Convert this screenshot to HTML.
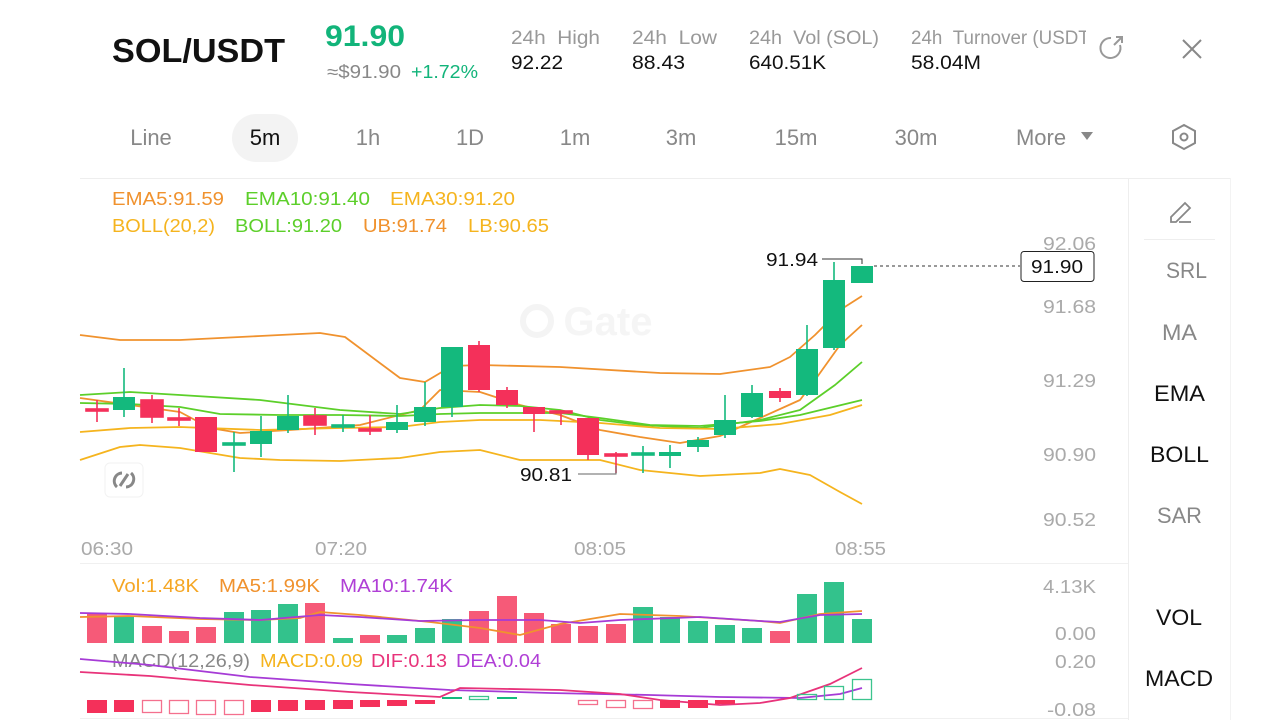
<!DOCTYPE html>
<html><head><meta charset="utf-8"><style>
html,body{margin:0;padding:0;background:#fff;}
svg{display:block;font-family:"Liberation Sans",Arial,sans-serif;}
</style></head><body>
<svg width="1280" height="720" viewBox="0 0 1280 720" xmlns="http://www.w3.org/2000/svg">
<rect width="1280" height="720" fill="#fff"/>
<!-- header -->
<text x="112" y="62" font-size="33" font-weight="bold" fill="#111" textLength="173" lengthAdjust="spacingAndGlyphs">SOL/USDT</text>
<text x="325" y="46" font-size="30" font-weight="bold" fill="#12B47A" textLength="80" lengthAdjust="spacingAndGlyphs">91.90</text>
<text x="327" y="78" font-size="18" fill="#888" textLength="74" lengthAdjust="spacingAndGlyphs">≈$91.90</text>
<text x="411" y="78" font-size="18" fill="#12B47A" textLength="67" lengthAdjust="spacingAndGlyphs">+1.72%</text>
<g font-size="19" fill="#999">
<text x="511" y="44" textLength="89" lengthAdjust="spacingAndGlyphs">24h&#160;&#160;High</text>
<text x="632" y="44" textLength="85" lengthAdjust="spacingAndGlyphs">24h&#160;&#160;Low</text>
<text x="749" y="44" textLength="130" lengthAdjust="spacingAndGlyphs">24h&#160;&#160;Vol (SOL)</text>
<text x="911" y="44" textLength="185" lengthAdjust="spacingAndGlyphs">24h&#160;&#160;Turnover (USDT)</text>
</g>
<g font-size="19" fill="#111">
<text x="511" y="69" textLength="52" lengthAdjust="spacingAndGlyphs">92.22</text>
<text x="632" y="69" textLength="53" lengthAdjust="spacingAndGlyphs">88.43</text>
<text x="749" y="69" textLength="77" lengthAdjust="spacingAndGlyphs">640.51K</text>
<text x="911" y="69" textLength="70" lengthAdjust="spacingAndGlyphs">58.04M</text>
</g>
<rect x="1086" y="20" width="30" height="40" fill="#fff"/>
<!-- refresh icon -->
<path d="M1120 45 A10 10 0 1 1 1111 38" fill="none" stroke="#999" stroke-width="2"/>
<path d="M1114 45 L1122 37 M1116 37 L1122 37 L1122 43" fill="none" stroke="#999" stroke-width="2"/>
<!-- close -->
<path d="M1183 40 L1201 58 M1201 40 L1183 58" stroke="#888" stroke-width="2"/>
<!-- tabs -->
<rect x="232" y="114" width="66" height="48" rx="24" fill="#f3f3f3"/>
<g font-size="22" fill="#888" text-anchor="middle">
<text x="151" y="145">Line</text><text x="265" y="145" fill="#111">5m</text><text x="368" y="145">1h</text><text x="470" y="145">1D</text><text x="575" y="145">1m</text><text x="681" y="145">3m</text><text x="796" y="145">15m</text><text x="916" y="145">30m</text><text x="1041" y="145">More</text>
</g>
<path d="M1081 132 L1093 132 L1087 140 Z" fill="#888"/>
<path d="M1184 125 L1195 131 L1195 143 L1184 149 L1173 143 L1173 131 Z" fill="none" stroke="#888" stroke-width="2"/>
<circle cx="1184" cy="137" r="3.5" fill="none" stroke="#888" stroke-width="2"/>
<!-- frames -->
<line x1="80" y1="178.5" x2="1231" y2="178.5" stroke="#eee"/>
<line x1="1128.5" y1="178" x2="1128.5" y2="720" stroke="#eee"/>
<line x1="1230.5" y1="178" x2="1230.5" y2="720" stroke="#f3f3f3"/>
<line x1="80" y1="563.5" x2="1128" y2="563.5" stroke="#f0f0f0"/>
<line x1="80" y1="718.5" x2="1128" y2="718.5" stroke="#f0f0f0"/>
<line x1="1144" y1="239.5" x2="1215" y2="239.5" stroke="#eee"/>
<!-- pencil -->
<path d="M1171 217 L1185 203 L1190 208 L1176 222 L1171 222 Z" fill="none" stroke="#888" stroke-width="1.8"/>
<line x1="1179" y1="222" x2="1191" y2="222" stroke="#888" stroke-width="1.8"/>
<g font-size="22" fill="#111">
<text x="1166" y="278" fill="#888" textLength="41" lengthAdjust="spacingAndGlyphs">SRL</text>
<text x="1162" y="340" fill="#888" textLength="35" lengthAdjust="spacingAndGlyphs">MA</text>
<text x="1154" y="401" textLength="51" lengthAdjust="spacingAndGlyphs">EMA</text>
<text x="1150" y="462" textLength="59" lengthAdjust="spacingAndGlyphs">BOLL</text>
<text x="1157" y="523" fill="#888" textLength="45" lengthAdjust="spacingAndGlyphs">SAR</text>
<text x="1156" y="625" textLength="46" lengthAdjust="spacingAndGlyphs">VOL</text>
<text x="1145" y="686" textLength="68" lengthAdjust="spacingAndGlyphs">MACD</text>
</g>
<!-- legends -->
<g font-size="18" lengthAdjust="spacingAndGlyphs">
<text x="112" y="205" fill="#F0922E" textLength="112" lengthAdjust="spacingAndGlyphs">EMA5:91.59</text>
<text x="245" y="205" fill="#5CCF2A" textLength="125" lengthAdjust="spacingAndGlyphs">EMA10:91.40</text>
<text x="390" y="205" fill="#F5B41E" textLength="125" lengthAdjust="spacingAndGlyphs">EMA30:91.20</text>
<text x="112" y="232" fill="#F5B41E" textLength="103" lengthAdjust="spacingAndGlyphs">BOLL(20,2)</text>
<text x="235" y="232" fill="#5CCF2A" textLength="107" lengthAdjust="spacingAndGlyphs">BOLL:91.20</text>
<text x="363" y="232" fill="#F0922E" textLength="84" lengthAdjust="spacingAndGlyphs">UB:91.74</text>
<text x="468" y="232" fill="#F5B41E" textLength="81" lengthAdjust="spacingAndGlyphs">LB:90.65</text>
<text x="112" y="592" fill="#F5A623" textLength="87" lengthAdjust="spacingAndGlyphs">Vol:1.48K</text>
<text x="219" y="592" fill="#F0922E" textLength="101" lengthAdjust="spacingAndGlyphs">MA5:1.99K</text>
<text x="340" y="592" fill="#B03FD6" textLength="113" lengthAdjust="spacingAndGlyphs">MA10:1.74K</text>
<text x="112" y="667" fill="#888" textLength="138" lengthAdjust="spacingAndGlyphs">MACD(12,26,9)</text>
<text x="260" y="667" fill="#F5B41E" textLength="103" lengthAdjust="spacingAndGlyphs">MACD:0.09</text>
<text x="371" y="667" fill="#E8337A" textLength="76" lengthAdjust="spacingAndGlyphs">DIF:0.13</text>
<text x="456" y="667" fill="#B03FD6" textLength="85" lengthAdjust="spacingAndGlyphs">DEA:0.04</text>
</g>
<!-- axis labels -->
<g font-size="18" fill="#aaa">
<text x="1043" y="250" textLength="53" lengthAdjust="spacingAndGlyphs">92.06</text>
<text x="1043" y="313" textLength="53" lengthAdjust="spacingAndGlyphs">91.68</text>
<text x="1043" y="387" textLength="53" lengthAdjust="spacingAndGlyphs">91.29</text>
<text x="1043" y="461" textLength="53" lengthAdjust="spacingAndGlyphs">90.90</text>
<text x="1043" y="526" textLength="53" lengthAdjust="spacingAndGlyphs">90.52</text>
<text x="1043" y="593" textLength="53" lengthAdjust="spacingAndGlyphs">4.13K</text>
<text x="1055" y="640" textLength="41" lengthAdjust="spacingAndGlyphs">0.00</text>
<text x="1055" y="668" textLength="41" lengthAdjust="spacingAndGlyphs">0.20</text>
<text x="1047" y="716" textLength="49" lengthAdjust="spacingAndGlyphs">-0.08</text>
<text x="81" y="555" textLength="52" lengthAdjust="spacingAndGlyphs">06:30</text>
<text x="315" y="555" textLength="52" lengthAdjust="spacingAndGlyphs">07:20</text>
<text x="574" y="555" textLength="52" lengthAdjust="spacingAndGlyphs">08:05</text>
<text x="835" y="555" textLength="51" lengthAdjust="spacingAndGlyphs">08:55</text>
</g>
<!-- watermark -->
<text x="608" y="335" font-size="40" font-weight="bold" fill="#f5f5f5" text-anchor="middle">Gate</text>
<circle cx="537" cy="321" r="14" fill="none" stroke="#f4f4f4" stroke-width="6"/>
<!-- small logo box -->
<rect x="105" y="463" width="38" height="34" rx="5" fill="#fff" stroke="#f2f2f2"/>
<path d="M117 487 A8 8 0 0 1 122 473 M131 473 A8 8 0 0 1 126 487 M120 486 L128 474" fill="none" stroke="#888" stroke-width="3"/>
<!-- indicator lines -->
<g fill="none" stroke-width="1.8" stroke-linejoin="round">
<polyline stroke="#F0922E" points="80,335 120,340 180,340 260,336 320,333 345,337 400,378 425,382 452,366 480,365 560,367 660,373 720,374 770,367 790,357 815,335 840,310 862,296"/>
<polyline stroke="#F0922E" points="80,398 130,405 180,412 210,428 240,433 290,430 360,425 420,410 440,390 480,392 520,405 560,415 600,430 640,437 680,443 720,436 760,418 800,400 815,380 840,345 862,325"/>
<polyline stroke="#5CCF2A" points="80,395 130,392 180,395 260,400 340,410 400,414 440,408 480,405 520,406 560,410 600,420 640,425 700,428 760,420 800,410 835,385 862,362"/>
<polyline stroke="#5CCF2A" points="80,403 130,404 180,407 220,414 280,415 340,415 400,416 440,414 480,413 560,413 600,418 650,425 700,426 760,421 800,415 862,400"/>
<polyline stroke="#F5B41E" points="80,432 130,428 180,427 260,430 340,428 400,427 440,422 480,420 540,420 600,423 660,428 720,429 780,424 830,415 862,405"/>
<polyline stroke="#F5B41E" points="80,460 120,447 140,445 180,448 240,458 280,460 340,461 400,458 440,452 480,450 520,460 600,460 640,470 700,476 760,473 780,469 810,475 840,492 862,504"/>
</g>
<!-- candles -->
<g stroke-width="1.6">
<g stroke="#F4305A" fill="#F4305A">
<line x1="97" y1="400" x2="97" y2="422"/><rect x="86" y="409" width="22" height="2"/>
<line x1="152" y1="395" x2="152" y2="423"/><rect x="141" y="400" width="22" height="17"/>
<line x1="179" y1="408" x2="179" y2="426"/><rect x="168" y="418" width="22" height="2"/>
<rect x="195" y="417" width="22" height="35" stroke="none"/>
<line x1="315" y1="408" x2="315" y2="435"/><rect x="304" y="416" width="22" height="9"/>
<line x1="370" y1="415" x2="370" y2="435"/><rect x="359" y="429" width="22" height="2"/>
<line x1="479" y1="341" x2="479" y2="392"/><rect x="468" y="345" width="22" height="45" stroke="none"/>
<line x1="507" y1="387" x2="507" y2="408"/><rect x="496" y="390" width="22" height="15" stroke="none"/>
<line x1="534" y1="407" x2="534" y2="432"/><rect x="523" y="407" width="22" height="7" stroke="none"/>
<line x1="561" y1="410" x2="561" y2="425"/><rect x="550" y="411" width="22" height="2"/>
<line x1="588" y1="418" x2="588" y2="460"/><rect x="577" y="418" width="22" height="37" stroke="none"/>
<line x1="616" y1="452" x2="616" y2="473"/><rect x="605" y="454" width="22" height="2"/>
<line x1="780" y1="388" x2="780" y2="402"/><rect x="769" y="391" width="22" height="7" stroke="none"/>
</g>
<g stroke="#14B97D" fill="#14B97D">
<line x1="124" y1="368" x2="124" y2="417"/><rect x="113" y="397" width="22" height="13" stroke="none"/>
<line x1="234" y1="432" x2="234" y2="472"/><rect x="223" y="443" width="22" height="2"/>
<line x1="261" y1="416" x2="261" y2="457"/><rect x="250" y="431" width="22" height="13" stroke="none"/>
<line x1="288" y1="395" x2="288" y2="433"/><rect x="277" y="416" width="22" height="14" stroke="none"/>
<line x1="343" y1="415" x2="343" y2="432"/><rect x="332" y="425" width="22" height="2"/>
<line x1="397" y1="405" x2="397" y2="433"/><rect x="386" y="422" width="22" height="8" stroke="none"/>
<line x1="425" y1="382" x2="425" y2="426"/><rect x="414" y="407" width="22" height="15" stroke="none"/>
<line x1="452" y1="347" x2="452" y2="417"/><rect x="441" y="347" width="22" height="60" stroke="none"/>
<line x1="643" y1="446" x2="643" y2="473"/><rect x="632" y="453" width="22" height="2"/>
<line x1="670" y1="445" x2="670" y2="468"/><rect x="659" y="452" width="22" height="4" stroke="none"/>
<line x1="698" y1="437" x2="698" y2="452"/><rect x="687" y="440" width="22" height="7" stroke="none"/>
<line x1="725" y1="395" x2="725" y2="438"/><rect x="714" y="420" width="22" height="15" stroke="none"/>
<line x1="752" y1="385" x2="752" y2="418"/><rect x="741" y="393" width="22" height="24" stroke="none"/>
<line x1="807" y1="325" x2="807" y2="396"/><rect x="796" y="349" width="22" height="46" stroke="none"/>
<line x1="834" y1="262" x2="834" y2="350"/><rect x="823" y="280" width="22" height="68" stroke="none"/>
<rect x="851" y="266" width="22" height="17" stroke="none"/>
</g>
</g>
<!-- high/low markers -->
<polyline points="822,259 862,259 862,264" fill="none" stroke="#333" stroke-width="1"/>
<text x="766" y="266" font-size="18" fill="#111" textLength="52" lengthAdjust="spacingAndGlyphs">91.94</text>
<polyline points="578,474 616,474 616,466" fill="none" stroke="#666" stroke-width="1"/>
<text x="520" y="481" font-size="18" fill="#111" textLength="52" lengthAdjust="spacingAndGlyphs">90.81</text>
<line x1="874" y1="266" x2="1020" y2="266" stroke="#333" stroke-dasharray="3,3"/>
<rect x="1021" y="251.5" width="73" height="30" rx="3" fill="#fff" stroke="#222"/>
<text x="1031" y="273" font-size="18" fill="#111" textLength="52" lengthAdjust="spacingAndGlyphs">91.90</text>
<!-- volume -->
<g fill="#F65A78">
<rect x="87" y="613" width="20" height="30"/><rect x="142" y="626" width="20" height="17"/><rect x="169" y="631" width="20" height="12"/><rect x="196" y="627" width="20" height="16"/>
<rect x="305" y="603" width="20" height="40"/><rect x="360" y="635" width="20" height="8"/><rect x="469" y="611" width="20" height="32"/><rect x="497" y="596" width="20" height="47"/>
<rect x="524" y="613" width="20" height="30"/><rect x="551" y="624" width="20" height="19"/><rect x="578" y="626" width="20" height="17"/><rect x="606" y="624" width="20" height="19"/><rect x="770" y="631" width="20" height="12"/>
</g>
<g fill="#33C28C">
<rect x="114" y="617" width="20" height="26"/><rect x="224" y="612" width="20" height="31"/><rect x="251" y="610" width="20" height="33"/><rect x="278" y="604" width="20" height="39"/>
<rect x="333" y="638" width="20" height="5"/><rect x="387" y="635" width="20" height="8"/><rect x="415" y="628" width="20" height="15"/><rect x="442" y="619" width="20" height="24"/>
<rect x="633" y="607" width="20" height="36"/><rect x="660" y="617" width="20" height="26"/><rect x="688" y="621" width="20" height="22"/><rect x="715" y="625" width="20" height="18"/><rect x="742" y="628" width="20" height="15"/>
<rect x="797" y="594" width="20" height="49"/><rect x="824" y="582" width="20" height="61"/><rect x="852" y="619" width="20" height="24"/>
</g>
<g fill="none" stroke-width="1.8">
<polyline stroke="#F0922E" points="80,617 130,616 200,619 260,620 300,618 320,612 360,615 430,622 480,628 520,635 560,624 620,614 680,616 760,621 780,623 820,614 862,611"/>
<polyline stroke="#A63BD6" points="80,613 130,614 200,618 260,620 320,615 360,617 420,621 480,620 540,620 580,623 620,620 700,617 760,621 780,622 820,615 862,614"/>
</g>
<!-- macd -->
<g fill="none" stroke-width="1.8">
<polyline stroke="#A63BD6" points="80,659 150,665 250,677 350,684 450,690 550,693 650,695 720,697 800,698 840,694 862,688"/>
<polyline stroke="#E8337A" points="80,672 150,676 250,685 350,692 440,697 460,688 560,690 620,694 660,700 720,705 760,703 790,698 830,684 862,668"/>
</g>
<g fill="#F4305A">
<rect x="87" y="700" width="20" height="13"/><rect x="114" y="700" width="20" height="12"/>
<rect x="251" y="700" width="20" height="12"/><rect x="278" y="700" width="20" height="11"/><rect x="305" y="700" width="20" height="10"/><rect x="333" y="700" width="20" height="9"/><rect x="360" y="700" width="20" height="7"/><rect x="387" y="700" width="20" height="6"/><rect x="415" y="700" width="20" height="4"/>
<rect x="660" y="700" width="20" height="8"/><rect x="688" y="700" width="20" height="8"/><rect x="715" y="700" width="20" height="4"/>
</g>
<g fill="none" stroke="#F4708E" stroke-width="1.3">
<rect x="142.5" y="700.5" width="19" height="12"/><rect x="169.5" y="700.5" width="19" height="13"/><rect x="196.5" y="700.5" width="19" height="14"/><rect x="224.5" y="700.5" width="19" height="14"/>
<rect x="578.5" y="700.5" width="19" height="4"/><rect x="606.5" y="700.5" width="19" height="7"/><rect x="633.5" y="700.5" width="19" height="8"/>
</g>
<g fill="#14B97D"><rect x="442" y="697" width="20" height="2"/><rect x="497" y="697" width="20" height="2"/></g>
<g fill="none" stroke="#3CC48E" stroke-width="1.3">
<rect x="469.5" y="696.5" width="19" height="3"/><rect x="797.5" y="694.5" width="19" height="5"/><rect x="824.5" y="686.5" width="19" height="13"/><rect x="852.5" y="679.5" width="19" height="20"/>
</g>
</svg>
</body></html>
